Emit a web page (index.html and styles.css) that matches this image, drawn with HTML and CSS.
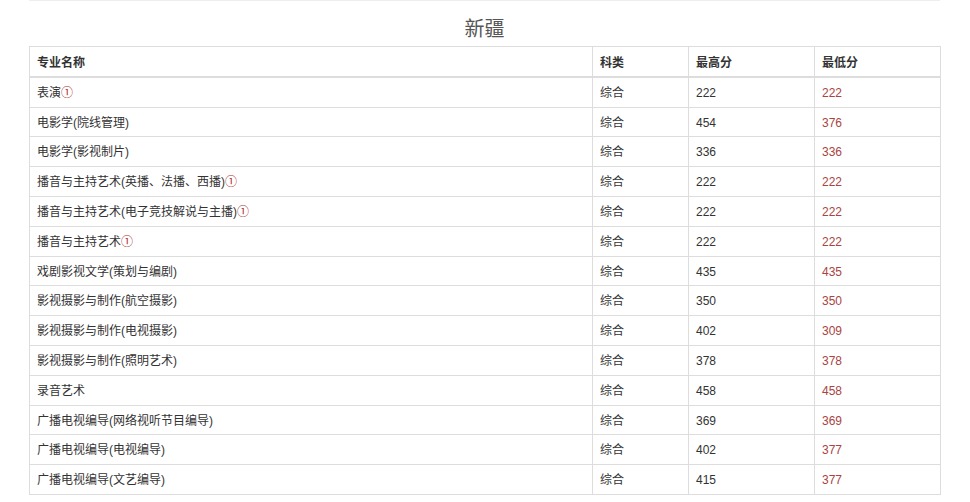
FILE: index.html
```html
<!DOCTYPE html>
<html lang="zh-CN">
<head>
<meta charset="utf-8">
<title>新疆</title>
<link rel="stylesheet" href="styles.css">
</head>
<body>
<div class="wrap">
  <h3 class="title">新疆</h3>
  <table class="score">
    <colgroup>
      <col class="c-name"><col class="c-type"><col class="c-max"><col class="c-min">
    </colgroup>
    <thead>
      <tr><th>专业名称</th><th>科类</th><th>最高分</th><th>最低分</th></tr>
    </thead>
    <tbody>
      <tr><td>表演<span class="mark">①</span></td><td>综合</td><td>222</td><td class="low">222</td></tr>
      <tr><td>电影学(院线管理)</td><td>综合</td><td>454</td><td class="low">376</td></tr>
      <tr><td>电影学(影视制片)</td><td>综合</td><td>336</td><td class="low">336</td></tr>
      <tr><td>播音与主持艺术(英播、法播、西播)<span class="mark">①</span></td><td>综合</td><td>222</td><td class="low">222</td></tr>
      <tr><td>播音与主持艺术(电子竞技解说与主播)<span class="mark">①</span></td><td>综合</td><td>222</td><td class="low">222</td></tr>
      <tr><td>播音与主持艺术<span class="mark">①</span></td><td>综合</td><td>222</td><td class="low">222</td></tr>
      <tr><td>戏剧影视文学(策划与编剧)</td><td>综合</td><td>435</td><td class="low">435</td></tr>
      <tr><td>影视摄影与制作(航空摄影)</td><td>综合</td><td>350</td><td class="low">350</td></tr>
      <tr><td>影视摄影与制作(电视摄影)</td><td>综合</td><td>402</td><td class="low">309</td></tr>
      <tr><td>影视摄影与制作(照明艺术)</td><td>综合</td><td>378</td><td class="low">378</td></tr>
      <tr><td>录音艺术</td><td>综合</td><td>458</td><td class="low">458</td></tr>
      <tr><td>广播电视编导(网络视听节目编导)</td><td>综合</td><td>369</td><td class="low">369</td></tr>
      <tr><td>广播电视编导(电视编导)</td><td>综合</td><td>402</td><td class="low">377</td></tr>
      <tr><td>广播电视编导(文艺编导)</td><td>综合</td><td>415</td><td class="low">377</td></tr>
    </tbody>
  </table>
</div>
</body>
</html>
```

FILE: styles.css
```css
html, body {
  margin: 0;
  padding: 0;
  background: #fff;
}
body {
  font-family: "Liberation Sans", "Noto Sans CJK SC", sans-serif;
  font-size: 12px;
  color: #333;
}
.wrap {
  width: 911px;
  margin-left: 29px;
  border-top: 1px solid #eee;
}
.title {
  margin: 0;
  padding-top: 13px;
  height: 32px;
  line-height: 30px;
  font-size: 20px;
  font-weight: normal;
  color: #555;
  text-align: center;
}
.score {
  width: 911px;
  border-collapse: collapse;
  table-layout: fixed;
}
.c-name { width: 563px; }
.c-type { width: 96px; }
.c-max { width: 126px; }
.c-min { width: 126px; }
.score th, .score td {
  border: 1px solid #ddd;
  padding: 7px 8px 5px 7px;
  line-height: 16.8px;
  text-align: left;
  vertical-align: top;
}
.score th {
  font-weight: bold;
  padding-top: 8px;
  padding-bottom: 4px;
  border-bottom-width: 2px;
}
.low { color: #a94442; }
.mark { color: #b02a2a; }
```
